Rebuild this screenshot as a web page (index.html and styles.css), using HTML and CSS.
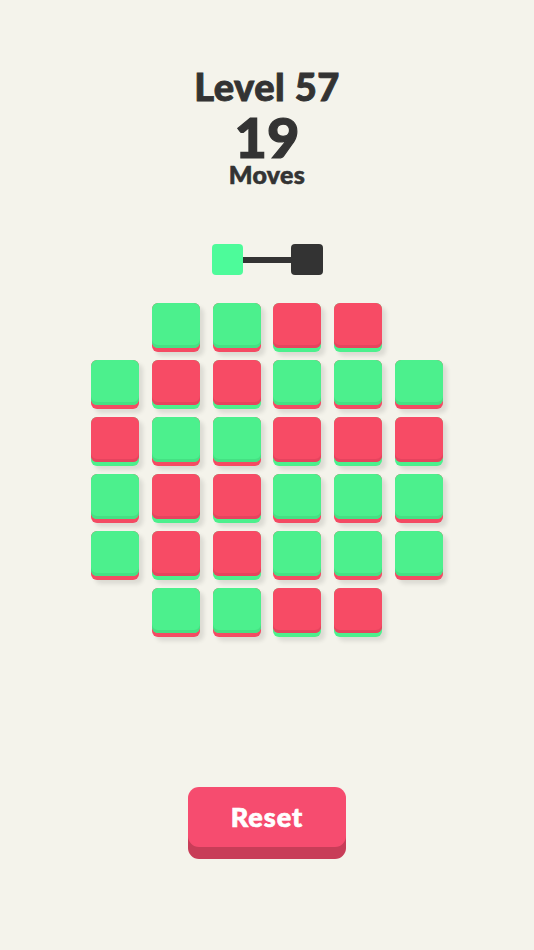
FILE: index.html
```html
<!DOCTYPE html>
<html>
<head>
<meta charset="utf-8">
<link rel="stylesheet" href="styles.css">
</head>
<body>
<div class="screen">
  <header class="header">
    <div class="level">Level 57</div>
    <div class="moves-count">19</div>
    <div class="moves-label">Moves</div>
  </header>
  <div class="legend">
    <div class="legend-sq green"></div>
    <div class="legend-line"></div>
    <div class="legend-sq dark"></div>
  </div>
  <div class="board">
    <div class="cell"></div>
    <div class="tile g"><div class="face"></div></div>
    <div class="tile g"><div class="face"></div></div>
    <div class="tile r"><div class="face"></div></div>
    <div class="tile r"><div class="face"></div></div>
    <div class="cell"></div>

    <div class="tile g"><div class="face"></div></div>
    <div class="tile r"><div class="face"></div></div>
    <div class="tile r"><div class="face"></div></div>
    <div class="tile g"><div class="face"></div></div>
    <div class="tile g"><div class="face"></div></div>
    <div class="tile g"><div class="face"></div></div>

    <div class="tile r"><div class="face"></div></div>
    <div class="tile g"><div class="face"></div></div>
    <div class="tile g"><div class="face"></div></div>
    <div class="tile r"><div class="face"></div></div>
    <div class="tile r"><div class="face"></div></div>
    <div class="tile r"><div class="face"></div></div>

    <div class="tile g"><div class="face"></div></div>
    <div class="tile r"><div class="face"></div></div>
    <div class="tile r"><div class="face"></div></div>
    <div class="tile g"><div class="face"></div></div>
    <div class="tile g"><div class="face"></div></div>
    <div class="tile g"><div class="face"></div></div>

    <div class="tile g"><div class="face"></div></div>
    <div class="tile r"><div class="face"></div></div>
    <div class="tile r"><div class="face"></div></div>
    <div class="tile g"><div class="face"></div></div>
    <div class="tile g"><div class="face"></div></div>
    <div class="tile g"><div class="face"></div></div>

    <div class="cell"></div>
    <div class="tile g"><div class="face"></div></div>
    <div class="tile g"><div class="face"></div></div>
    <div class="tile r"><div class="face"></div></div>
    <div class="tile r"><div class="face"></div></div>
    <div class="cell"></div>
  </div>
  <div class="actions">
    <button class="reset">Reset</button>
  </div>
</div>
</body>
</html>
```
FILE: styles.css
```css
html, body {
  margin: 0;
  padding: 0;
  background: #f4f3eb;
}
.screen {
  width: 534px;
  height: 950px;
  display: flex;
  flex-direction: column;
  align-items: center;
  font-family: Lato, "Liberation Sans", sans-serif;
  color: #333333;
}
.header {
  display: flex;
  flex-direction: column;
  align-items: center;
  padding-top: 66.7px;
}
.level {
  font-size: 38px;
  font-weight: 900;
  line-height: 38px;
  letter-spacing: 0.5px;
  -webkit-text-stroke: 0.9px #333333;
}
.moves-count {
  font-size: 56px;
  font-weight: 900;
  line-height: 48px;
  margin-top: 7.9px;
  -webkit-text-stroke: 1.2px #333333;
}
.moves-label {
  font-size: 25px;
  font-weight: 900;
  line-height: 26px;
  letter-spacing: 0.3px;
  -webkit-text-stroke: 0.6px #333333;
}
.legend {
  display: flex;
  align-items: center;
  margin-top: 57.3px;
}
.legend-sq {
  width: 31.5px;
  height: 31.5px;
  border-radius: 4px;
}
.legend-sq.green { background: #4dfb9a; }
.legend-sq.dark { background: #333333; }
.legend-line {
  width: 48px;
  height: 6px;
  background: #333333;
}
.board {
  display: grid;
  grid-template-columns: repeat(6, 48px);
  grid-auto-rows: 49px;
  column-gap: 12.75px;
  row-gap: 8px;
  margin-top: 27.5px;
}
.tile {
  border-radius: 6px;
  display: flex;
  flex-direction: column;
  box-shadow: 4px 4px 4px rgba(0, 0, 0, 0.1);
}
.tile .face {
  height: 45px;
  border-radius: 6px;
}
.tile.g { background: #f44a63; }
.tile.r { background: #4cf08d; }
.tile.g .face {
  background: #4cf08d;
  box-shadow: inset 0 -3px 0 #45e083;
}
.tile.r .face {
  background: #f74b65;
  box-shadow: inset 0 -3px 0 #e6445e;
}
.actions {
  margin-top: 150px;
}
.reset {
  width: 158px;
  height: 60px;
  border: none;
  border-radius: 11px;
  background: #f64c6f;
  box-shadow: 0 12px 0 #c83d58;
  color: #ffffff;
  font-family: Lato, "Liberation Sans", sans-serif;
  font-size: 27px;
  font-weight: 900;
  letter-spacing: 1px;
  -webkit-text-stroke: 0.7px #ffffff;
  padding: 0;
}
```
